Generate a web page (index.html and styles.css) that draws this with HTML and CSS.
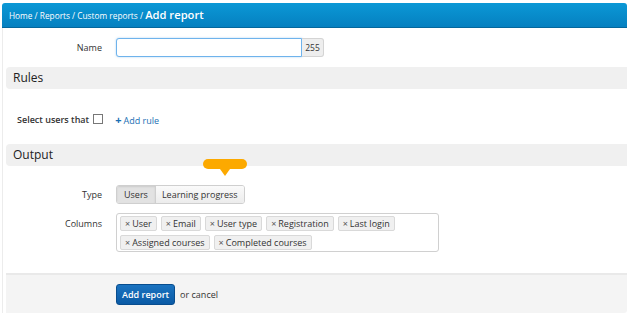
FILE: index.html
```
<!DOCTYPE html>
<html>
<head>
<meta charset="utf-8">
<title>Add report</title>
<link rel="stylesheet" href="styles.css">
</head>
<body>
<div class="page">
	<div class="head">
		<span class="crumbs">Home / Reports / Custom reports / </span><b>Add report</b>
	</div>

	<div class="content">
		<div class="row first">
			<label class="lbl">Name</label>
			<div class="inputgrp">
				<input type="text" class="txt">
				<span class="addon">255</span>
			</div>
		</div>

		<div class="bar">Rules</div>

		<div class="rulerow">
			<span class="sel">Select users that</span>
			<span class="chk"></span>
			<a href="#" class="addrule"><span class="plus">+</span>Add rule</a>
		</div>

		<div class="bar">Output</div>

		<div class="tipwrap">
			<div class="tip"></div>
		</div>

		<div class="row typerow">
			<label class="lbl">Type</label>
			<div class="btngrp">
				<span class="seg on">Users</span><span class="seg">Learning progress</span>
			</div>
		</div>

		<div class="row colrow">
			<label class="lbl">Columns</label>
			<div class="tags">
				<span class="tag"><i>&times;</i>User</span>
				<span class="tag"><i>&times;</i>Email</span>
				<span class="tag"><i>&times;</i>User type</span>
				<span class="tag"><i>&times;</i>Registration</span>
				<span class="tag"><i>&times;</i>Last login</span>
				<span class="tag"><i>&times;</i>Assigned courses</span>
				<span class="tag"><i>&times;</i>Completed courses</span>
			</div>
		</div>

		<div class="foot">
			<button class="btn">Add report</button>
			<span class="or">or <a href="#">cancel</a></span>
		</div>
	</div>
</div>
</body>
</html>
```

FILE: styles.css
```
body{
	margin:0;
	padding:0;
	background:#fff;
	font-family:"Open Sans","DejaVu Sans",sans-serif;
	font-size:9px;
	color:#333;
}
.page{
	margin:3px 0 0 2px;
	width:625px;
}
.head{
	height:24px;
	line-height:23px;
	padding-left:7px;
	color:#fff;
	background:linear-gradient(#0b98d6,#0580c0);
	border-bottom:1px solid #04679c;
	border-radius:3px 3px 0 0;
	white-space:nowrap;
}
.crumbs{
	font-size:8.3px;
}
.head b{
	font-size:11.2px;
	font-weight:600;
}
.content{
	border-left:1px solid #ececec;
}
.row{
	display:flex;
	align-items:center;
}
.lbl{
	width:99px;
	text-align:right;
	margin-right:14px;
	color:#333;
}
.first{
	padding-top:9px;
	height:20px;
}
.inputgrp{
	display:flex;
}
.txt{
	box-sizing:border-box;
	width:186px;
	height:19px;
	margin:0;
	border:1px solid #6fb3ec;
	border-radius:3px 0 0 3px;
	box-shadow:0 0 2px rgba(80,160,230,.5);
	outline:none;
	padding:0 4px;
}
.addon{
	box-sizing:border-box;
	height:19px;
	width:22px;
	line-height:17px;
	text-align:center;
	font-size:8.5px;
	background:#eee;
	border:1px solid #d4d4d4;
	border-left:none;
	border-radius:0 3px 3px 0;
}
.bar{
	margin:10px 0 0 3px;
	height:22px;
	line-height:21px;
	padding-left:7px;
	font-size:12px;
	color:#222;
	background:#f0f0f0;
	border-radius:4px 0 0 4px;
}
.rulerow{
	display:flex;
	align-items:center;
	height:16px;
	margin:22px 0 0 14px;
}
.sel{
	font-weight:600;
	color:#333;
}
.chk{
	width:8px;
	height:8px;
	border:1px solid #777;
	margin-left:4px;
	background:#fff;
}
.addrule{
	margin-left:12px;
	color:#1a6fb4;
	text-decoration:none;
}
.plus{
	font-weight:bold;
	font-size:11px;
	margin-right:2px;
}
.rulerow + .bar{
	margin-top:17px;
}
.tipwrap{
	height:0;
	position:relative;
}
.tip{
	position:absolute;
	left:200px;
	top:-7px;
	width:44px;
	height:10px;
	background:#fca900;
	border-radius:5px;
}
.tip:after{
	content:"";
	position:absolute;
	left:17px;
	top:10px;
	border:5px solid transparent;
	border-top:7px solid #fca900;
	border-bottom:none;
}
.typerow{
	margin-top:19px;
}
.btngrp{
	display:flex;
	border:1px solid #cfcfcf;
	border-radius:3px;
	height:17px;
	overflow:hidden;
}
.seg{
	line-height:17px;
	padding:0 6px;
	background:linear-gradient(#fafafa,#ececec);
	color:#333;
}
.seg.on{
	padding:0 7px;
	background:#e2e2e2;
	border-right:1px solid #cfcfcf;
	box-shadow:inset 0 1px 2px rgba(0,0,0,.1);
}
.colrow{
	margin-top:9px;
	align-items:flex-start;
}
.colrow .lbl{
	padding-top:4px;
}
.tags{
	box-sizing:border-box;
	width:323px;
	height:39px;
	border:1px solid #d0d0d0;
	border-radius:3px;
	padding:2px 3px;
	display:flex;
	flex-wrap:wrap;
	gap:4px;
	align-content:flex-start;
}
.tag{
	box-sizing:border-box;
	height:15px;
	line-height:13px;
	padding:0 4px 0 4px;
	background:#f0f0f0;
	border:1px solid #d9d9d9;
	border-radius:2px;
	color:#333;
}
.tag i{
	font-style:normal;
	color:#555;
	font-size:9px;
	margin-right:2px;
}
.foot{
	margin:21px 0 0 3px;
	height:38px;
	background:#f4f4f4;
	border-top:2px solid #e9e9e9;
	border-radius:0 0 3px 0;
	padding-left:110px;
	display:flex;
	align-items:center;
}
.btn{
	height:21px;
	padding:0 5px;
	font-family:inherit;
	font-size:9px;
	font-weight:600;
	color:#fff;
	background:linear-gradient(#1b73c0,#0a5aa5);
	border:1px solid #084d8e;
	border-radius:3px;
}
.or{
	margin-left:5px;
	color:#333;
}
.or a{
	color:#333;
	text-decoration:none;
}
```
